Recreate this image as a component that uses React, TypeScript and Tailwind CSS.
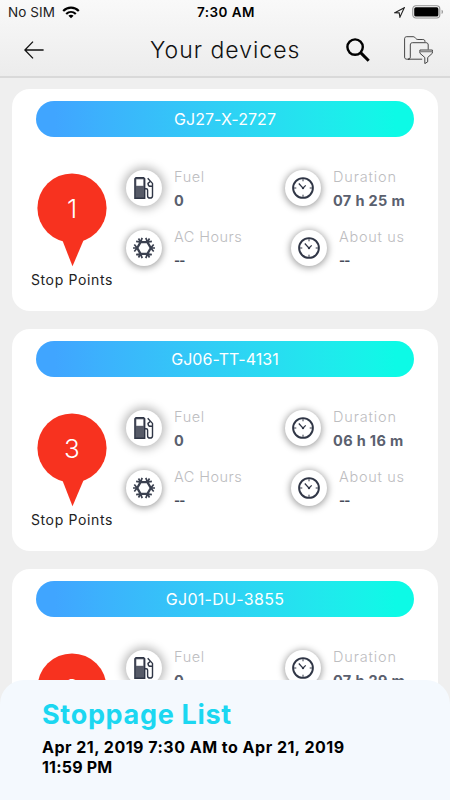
import type { ReactNode } from "react";

type Device = { id: string; spacing: string; stops: number; duration: string; collapsed?: boolean };

const devices: Device[] = [
  { id: "GJ27-X-2727", spacing: "tracking-[0.05px]", stops: 1, duration: "07 h 25 m" },
  { id: "GJ06-TT-4131", spacing: "tracking-[0.05px]", stops: 3, duration: "06 h 16 m" },
  { id: "GJ01-DU-3855", spacing: "tracking-[0.3px]", stops: 2, duration: "07 h 29 m", collapsed: true },
];

function WifiIcon() {
  return (
    <svg className="ml-[7px] h-[13px] w-[18px]" viewBox="0 0 18 13">
      <g fill="none" stroke="#000" strokeWidth="2.2">
        <path d="M1.2 5C5.6.6 12.4.6 16.8 5" />
        <path d="M4.2 8C7 5.3 11 5.3 13.8 8" />
      </g>
      <path d="M6.4 9.7c1.5-1.4 3.7-1.4 5.2 0L9 12.3z" fill="#000" />
    </svg>
  );
}

function BatteryIcon() {
  return (
    <svg className="h-[14px] w-8" viewBox="0 0 32 14">
      <rect x=".8" y=".8" width="27" height="12.2" rx="3.2" fill="#fff" stroke="#909090" strokeWidth="1.1" />
      <rect x="2.2" y="2.3" width="24.2" height="9.2" rx="1.6" fill="#000" />
      <path d="M29.6 4.8c1.8.6 1.8 3.6 0 4.2z" fill="#909090" />
    </svg>
  );
}

function BackArrow() {
  return (
    <svg className="h-[18px] w-5" viewBox="0 0 20 18" fill="none" stroke="#111" strokeWidth="1.3">
      <path d="M19.6 9H.9M9 .6.9 9 9 17.4" />
    </svg>
  );
}

function SearchIcon() {
  return (
    <svg className="h-6 w-6" viewBox="0 0 24 24" fill="none" stroke="#000">
      <circle cx="9.1" cy="9.1" r="7.7" strokeWidth="2.4" />
      <path d="m14.6 14.6 8.1 8.1" strokeWidth="3" />
    </svg>
  );
}

function FolderFilterIcon() {
  return (
    <svg className="h-7 w-[29px]" viewBox="0 0 29 28" fill="none" stroke="#333" strokeWidth=".9" strokeLinejoin="round">
      <path d="M5.5 23.2H2.8C1.4 23.2.6 22.4.6 21V2.7C.6 1.5 1.4.7 2.6.7h6.5c1.500 0 1.800.8 2.600 1.700.6.7 1.200 1.100 2.200 1.100h4.900c1.600 0 2.200.7 2.200 2.400" />
      <path d="M18.2 23.2H4c1.500 0 2.300-.8 2.300-2.300V9c0-1.500.8-2.300 2.300-2.300h13.300c1.500 0 2.300.8 2.300 2.300v4.500" />
      <path d="M15.9 14h12.500v3.200l-4.700 4.300v4.300L20.800 27.600v-6.100l-4.900-4.300z" fill="#efefef" />
      <path d="M15.9 15.600h12.500" strokeWidth="1.400" stroke="#888" />
    </svg>
  );
}

function FuelIcon() {
  return (
    <svg className="h-[22px] w-5" viewBox="0 0 20 22" fill="none" stroke="#303646" strokeWidth="1.400">
      <path d="M2 .8h7.600l1.100 1.100v19.300H.9V1.900z" fill="#575b68" />
      <path d="M2.300 2.300h7v6.500h-7z" fill="#fff" stroke="none" />
      <path d="M10.800 11.700h1.400c1 0 1.400.5 1.400 1.400v5.800c0 2.800 4.900 2.800 4.900 0V6.400L13.700 1.200" />
      <path d="M16.200 4.400 14 6.400c0 1.900 1.200 2.900 2.800 2.900h1.600" />
    </svg>
  );
}

const spokes = [0, 60, 120, 180, 240, 300];

function SnowflakeIcon() {
  return (
    <svg className="h-[22px] w-[22px]" viewBox="0 0 22 22" fill="none" stroke="#3b4150">
      <path d="M7.600 5.100h6.800l3.400 5.900-3.400 5.900H7.600L4.200 11z" strokeWidth="2.300" strokeLinejoin="round" />
      {spokes.map((angle) => (
        <g key={angle} transform={`rotate(${angle} 11 11)`} strokeWidth="1.700">
          <path d="M17.500 11h4.500M20.700 7.500 17.800 11l2.900 3.500" />
        </g>
      ))}
    </svg>
  );
}

const ticks = [0, 90, 180, 270];

function ClockIcon() {
  return (
    <svg className="h-[22px] w-[22px]" viewBox="0 0 22 22" fill="none" stroke="#303646">
      <circle cx="11" cy="11" r="9.900" strokeWidth="1.900" />
      {ticks.map((angle) => (
        <path key={angle} d="M11 1.800v2.500" strokeWidth="1" transform={`rotate(${angle} 11 11)`} />
      ))}
      <path d="m6.800 6.500 4.200 4.600 2.700-2.700" strokeWidth="1.300" />
      <circle cx="11" cy="11" r="1.200" fill="#303646" stroke="none" />
    </svg>
  );
}

type MetricProps = { icon: ReactNode; label: string; value: string; labelSpacing: string; strong?: boolean };

function Metric({ icon, label, value, labelSpacing, strong }: MetricProps) {
  return (
    <div className="flex h-[60px] items-start gap-3">
      <div
        className={
          strong
            ? "flex h-9 w-9 shrink-0 items-center justify-center rounded-full bg-white shadow-[0_0_10px_3px_rgba(0,0,0,0.27)]"
            : "flex h-9 w-9 shrink-0 items-center justify-center rounded-full bg-white shadow-[0_1px_7px_1px_rgba(0,0,0,0.38)]"
        }
      >
        {icon}
      </div>
      <div className="-mt-[3px] whitespace-nowrap">
        <div className={`h-5 text-[14.5px] leading-5 font-light text-[#bdbdbf] ${labelSpacing}`}>{label}</div>
        {value === "--" ? (
          <div className="mt-[3px] h-5 text-[13px] leading-5 font-bold tracking-[-0.8px] text-[#454b5a]">{value}</div>
        ) : (
          <div className="mt-1 h-5 text-[14.5px] leading-5 font-bold tracking-[0.35px] text-[#5a606e]">{value}</div>
        )}
      </div>
    </div>
  );
}

function DeviceCard({ device }: { device: Device }) {
  return (
    <section className="h-[222px] shrink-0 rounded-[18px] bg-white px-6 pt-3">
      <div
        className={`flex h-9 items-center justify-center rounded-full bg-linear-to-r from-[#40a5ff] from-5% to-[#0dfae6] to-95% pb-px text-[16px] text-white ${device.spacing}`}
      >
        {device.id}
      </div>
      <div className="flex pt-[33px]">
        <div className="-ml-[6px] flex w-[84px] flex-col items-center pt-[3px]">
          <div className="grid">
            <svg className="col-start-1 row-start-1 h-[94px] w-[70px]" viewBox="0 0 70 94" fill="#f7321f">
              <circle cx="35" cy="35" r="34.600" />
              <path d="M24.500 65h23L35.500 93.300z" />
            </svg>
            <div className="col-start-1 row-start-1 flex h-[70px] items-center justify-center pt-px text-[26px] leading-7 font-light text-white">
              {device.stops}
            </div>
          </div>
          {!device.collapsed && (
            <div className="mt-[3px] text-[14px] leading-5 tracking-[0.65px] whitespace-nowrap text-[#222]">Stop Points</div>
          )}
        </div>
        <div className="ml-3 w-[159px]">
          <Metric icon={<FuelIcon />} label="Fuel" value="0" labelSpacing="tracking-[0.6px]" strong />
          {!device.collapsed && (
            <Metric icon={<SnowflakeIcon />} label="AC Hours" value="--" labelSpacing="tracking-[0.45px]" />
          )}
        </div>
        <div>
          <Metric icon={<ClockIcon />} label="Duration" value={device.duration} labelSpacing="tracking-[0.85px]" />
          {!device.collapsed && (
            <div className="pl-[6px]">
              <Metric icon={<ClockIcon />} label="About us" value="--" labelSpacing="tracking-[0.7px]" />
            </div>
          )}
        </div>
      </div>
    </section>
  );
}

export default function App() {
  return (
    <main className="relative h-[800px] w-[450px] overflow-hidden bg-[#efefef] font-['Inter','Liberation_Sans',sans-serif]">
      <header className="h-[78px] border-b-2 border-[#d9d9d9] bg-linear-to-b from-[#f9f9f9] to-[#ececec]">
        <div className="grid h-6 grid-cols-3 items-center px-2">
          <div className="flex items-center text-[13.5px] tracking-[0.1px] text-[#222]">
            No SIM
            <WifiIcon />
          </div>
          <div className="pl-[2px] text-center text-[13.5px] font-semibold tracking-[0.45px] text-black">7:30 AM</div>
          <div className="-mr-[2px] flex items-center justify-end gap-[7px]">
            <svg className="h-[11px] w-[11px]" viewBox="0 0 11 11" fill="none" stroke="#222" strokeWidth="1.100">
              <path d="M.8 5.800 10.300.7 5.900 10.200 5.200 5.900z" />
            </svg>
            <BatteryIcon />
          </div>
        </div>
        <div className="flex h-[52px] items-center pl-6">
          <BackArrow />
          <h1 className="ml-[106px] w-[152px] text-[23px] leading-8 font-light tracking-[1px] whitespace-nowrap text-[#111]">
            Your devices
          </h1>
          <div className="ml-[44px]">
            <SearchIcon />
          </div>
          <div className="ml-[34px]">
            <FolderFilterIcon />
          </div>
        </div>
      </header>
      <div className="flex flex-col gap-[18px] px-3 pt-[11px]">
        {devices.map((device) => (
          <DeviceCard key={device.id} device={device} />
        ))}
      </div>
      <aside className="absolute inset-x-0 bottom-0 h-[120px] rounded-t-[24px] bg-[#f4f9fe] pt-[17px] pl-[42px]">
        <h2 className="text-[27px] leading-9 font-bold tracking-[0.68px] text-[#1bd7f1]">Stoppage List</h2>
        <p className="mt-1 text-[16px] leading-5 font-bold tracking-[0.49px] whitespace-nowrap text-black">
          Apr 21, 2019 7:30 AM to Apr 21, 2019
          <br />
          <span className="tracking-[0.2px]">11:59 PM</span>
        </p>
      </aside>
    </main>
  );
}
